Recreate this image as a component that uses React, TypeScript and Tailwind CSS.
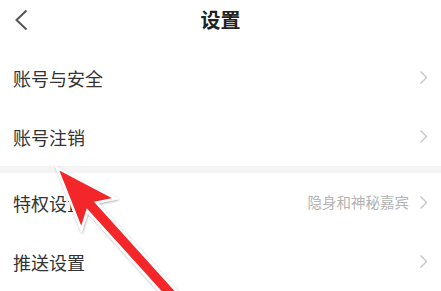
const rows = [
  { label: "账号与安全" },
  { label: "账号注销" },
];

const rows2 = [
  { label: "特权设置", extra: "隐身和神秘嘉宾" },
  { label: "推送设置" },
];

function Chevron() {
  return (
    <svg width="9" height="15" viewBox="0 0 9 15" className="shrink-0">
      <polyline points="1.5,1.5 7.5,7.5 1.5,13.5" fill="none" stroke="#c6c6c6" strokeWidth="1.4" />
    </svg>
  );
}

function Row({ label, extra }: { label: string; extra?: string }) {
  return (
    <div className="h-[59px] flex items-center justify-between pl-[13px] pr-[13px]">
      <span className="text-[18px] text-[#333333] leading-none">{label}</span>
      <div className="flex items-center gap-[10px]">
        {extra && <span className="text-[14.5px] text-[#b3b3b3] leading-none">{extra}</span>}
        <Chevron />
      </div>
    </div>
  );
}

function Arrow() {
  // tip (57,168), pointing up-left, shaft runs off the bottom edge
  const pts = "57,168 115.6,198.6 96.3,202.6 195.5,312.4 186.5,320.4 87.3,210.6 81.4,229.4";
  return (
    <svg width="441" height="291" className="absolute left-0 top-0 pointer-events-none">
      <defs>
        <filter id="sh" x="-20%" y="-20%" width="140%" height="140%">
          <feDropShadow dx="0.5" dy="1" stdDeviation="1" floodColor="#000" floodOpacity="0.35" />
        </filter>
      </defs>
      <polygon points={pts} fill="#f3282b" stroke="#ffffff" strokeWidth="2.5" strokeLinejoin="miter" filter="url(#sh)" />
    </svg>
  );
}

export default function App() {
  return (
    <div className="relative w-[441px] h-[291px] overflow-hidden bg-white" style={{ fontFamily: '"Noto Sans CJK SC", "Noto Sans", sans-serif' }}>
      <div className="h-[48px] pb-[8px] flex items-center relative">
        <svg width="14" height="22" viewBox="0 0 14 22" className="ml-[14px]">
          <polyline points="12.5,1.5 2.5,11 12.5,20.5" fill="none" stroke="#555555" strokeWidth="2" />
        </svg>
        <div className="absolute inset-x-0 top-0 h-[40px] flex items-center justify-center">
          <span className="text-[20px] font-bold text-[#222222] leading-none">设置</span>
        </div>
      </div>
      {rows.map((r) => (
        <Row key={r.label} label={r.label} />
      ))}
      <div className="h-[7px] bg-[#f4f4f4]" />
      {rows2.map((r) => (
        <Row key={r.label} label={r.label} extra={r.extra} />
      ))}
      <Arrow />
    </div>
  );
}
